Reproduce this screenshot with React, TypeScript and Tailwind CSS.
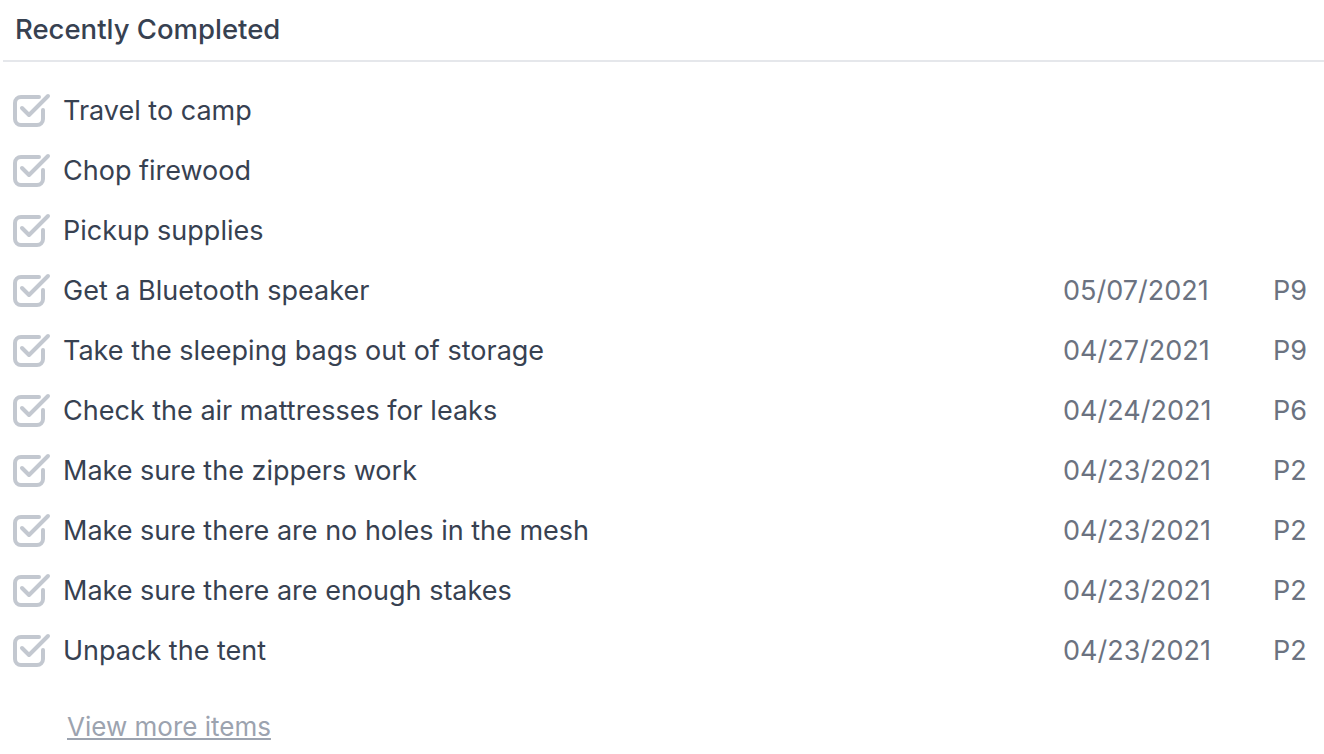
const items = [
  { title: "Travel to camp" },
  { title: "Chop firewood" },
  { title: "Pickup supplies" },
  { title: "Get a Bluetooth speaker", date: "05/07/2021", priority: "P9" },
  { title: "Take the sleeping bags out of storage", date: "04/27/2021", priority: "P9" },
  { title: "Check the air mattresses for leaks", date: "04/24/2021", priority: "P6" },
  { title: "Make sure the zippers work", date: "04/23/2021", priority: "P2" },
  { title: "Make sure there are no holes in the mesh", date: "04/23/2021", priority: "P2" },
  { title: "Make sure there are enough stakes", date: "04/23/2021", priority: "P2" },
  { title: "Unpack the tent", date: "04/23/2021", priority: "P2" },
];

function CheckedBox() {
  return (
    <svg
      width="40"
      height="38"
      viewBox="0 0 40 38"
      fill="none"
      stroke="#c3c8d0"
      strokeWidth="4"
      strokeLinecap="round"
      strokeLinejoin="round"
      className="shrink-0"
    >
      <path d="M31 18v9a6 6 0 0 1-6 6H9a6 6 0 0 1-6-6V11a6 6 0 0 1 6-6h18" />
      <path d="M10 16l7 7L36 4" />
    </svg>
  );
}

export default function App() {
  return (
    <div className="w-[1324px] h-[754px] bg-white overflow-hidden font-['Inter',sans-serif]">
      <div className="ml-[3px] h-[62px] border-b-2 border-[#e5e7eb] pl-[12px] flex items-center">
        <h2 className="text-[27.5px] font-medium text-[#374151]">Recently Completed</h2>
      </div>

      <ul className="pt-[19px]">
        {items.map((item) => (
          <li key={item.title} className="h-[60px] flex items-center pl-[12px] pr-[17px] text-[27px]">
            <CheckedBox />
            <span className="ml-[11px] flex-1 text-[#374151]">{item.title}</span>
            {item.date && <span className="w-[210px] text-[#6b7280]">{item.date}</span>}
            {item.priority && <span className="w-[34px] text-[#6b7280]">{item.priority}</span>}
          </li>
        ))}
      </ul>

      <div className="pl-[67px] pt-[26px]">
        <a href="#" className="text-[26px] text-[#9ca3af] underline">
          View more items
        </a>
      </div>
    </div>
  );
}
